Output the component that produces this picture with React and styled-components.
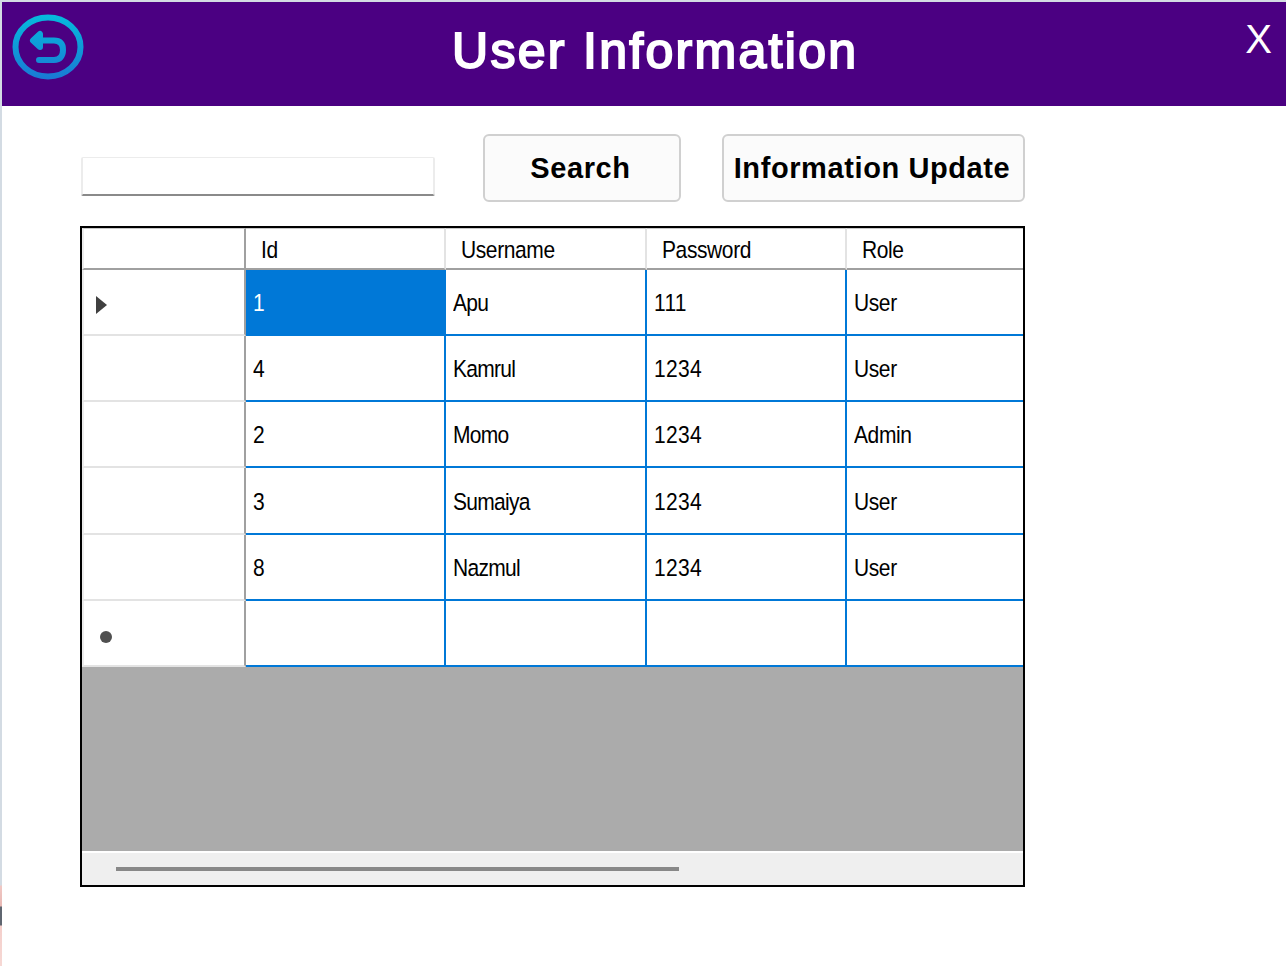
import React from "react";
import styled, { createGlobalStyle } from "styled-components";

const GlobalStyle = createGlobalStyle`
  html, body {
    margin: 0;
    padding: 0;
    background: #fff;
  }
  body {
    font-family: "Liberation Sans", Arial, sans-serif;
    color: #000;
  }
`;

const Page = styled.div`
  display: flex;
  width: 1286px;
  height: 966px;
  overflow: hidden;
`;

const DesktopEdge = styled.div`
  flex: 0 0 2px;
  background: linear-gradient(
    to bottom,
    #d3dbe3 0,
    #d3dbe3 885px,
    #f0c8c4 886px,
    #e8b8b4 906px,
    #5f6670 907px,
    #5f6670 925px,
    #f4cfcb 926px,
    #f6d8d4 100%
  );
`;

const Main = styled.div`
  flex: 1;
  display: flex;
  flex-direction: column;
  min-width: 0;
`;

const TopEdge = styled.div`
  flex: 0 0 2px;
  background: #d3dbe3;
`;

const Header = styled.header`
  flex: 0 0 104px;
  display: flex;
  align-items: flex-start;
  background: #4b0082;
  color: #fff;
`;

const BackIcon = styled.svg`
  flex: 0 0 auto;
  width: 72px;
  height: 66px;
  margin: 12px 0 0 10px;
`;

const Title = styled.h1`
  margin: 20px 0 0 368px;
  font-size: 50px;
  line-height: 58px;
  font-weight: 400;
  letter-spacing: 2.3px;
  -webkit-text-stroke: 2px #fff;
  white-space: nowrap;
`;

const CloseText = styled.span`
  margin: 14px 0 0 auto;
  padding-right: 14px;
  font-size: 40px;
  line-height: 46px;
`;

const Content = styled.main`
  padding: 28px 0 0 78px;
`;

const Toolbar = styled.div`
  display: flex;
  align-items: flex-start;
  gap: 41px;
  margin-bottom: 24px;
`;

const SearchInput = styled.input`
  box-sizing: border-box;
  width: 354px;
  height: 39px;
  margin: 23px 7px 0 1px;
  padding: 0;
  border: 2px solid #ececec;
  border-top-width: 1px;
  border-bottom: 2px solid #8a8a8a;
  border-radius: 2px;
  background: #fff;
  outline: none;
`;

const ActionButton = styled.button`
  box-sizing: border-box;
  width: ${(p) => p.$width}px;
  height: 68px;
  padding: 0 3px 0 0;
  border: 2px solid #d0d0d0;
  border-radius: 6px;
  background: #fbfbfb;
  color: #000;
  font-family: "Liberation Sans", Arial, sans-serif;
  font-size: 29px;
  font-weight: 700;
  letter-spacing: 0.6px;
`;

const GridFrame = styled.div`
  box-sizing: border-box;
  display: flex;
  flex-direction: column;
  width: 945px;
  height: 661px;
  border: 2px solid #000;
  background: #ababab;
`;

const Grid = styled.div`
  display: grid;
  grid-template-columns: 164px 200px 201px 200px 176px;
  grid-template-rows: 42px 66px 66px 66px 67px 66px 66px;
`;

const Cell = styled.div`
  box-sizing: border-box;
  display: flex;
  align-items: center;
  min-width: 0;
  padding: 2px 0 0 7px;
  border-right: ${(p) => (p.$last ? "0" : "2px solid #0078d7")};
  border-bottom: 2px solid #0078d7;
  background: ${(p) => (p.$selected ? "#0078d7" : "#fff")};
  color: ${(p) => (p.$selected ? "#fff" : "#000")};
`;

const HeadCell = styled.div`
  box-sizing: border-box;
  display: flex;
  align-items: center;
  padding: 2px 0 0 15px;
  border-top: 1px solid #c8c8c8;
  border-right: ${(p) => (p.$last ? "0" : "2px solid #e3e3e3")};
  border-bottom: 2px solid #a0a0a0;
  background: #fff;
`;

// the old grid font is tall and narrow, so stretch the text a little
const CellText = styled.span`
  display: inline-block;
  font-size: 21px;
  letter-spacing: ${(p) => p.$spacing ?? -0.4}px;
  transform: scaleY(1.13);
`;

const CornerCell = styled.div`
  box-sizing: border-box;
  border-top: 1px solid #c8c8c8;
  border-left: 2px solid #ececec;
  border-right: 2px solid #a0a0a0;
  border-bottom: 2px solid #a0a0a0;
  background: #fff;
`;

const RowHead = styled.div`
  box-sizing: border-box;
  display: flex;
  align-items: center;
  padding-left: 12px;
  border-left: 2px solid #ececec;
  border-right: 2px solid #a0a0a0;
  border-bottom: 2px solid #e3e3e3;
  background: #fff;
`;

const RowArrow = styled.span`
  width: 0;
  height: 0;
  margin-top: 6px;
  border-top: 9px solid transparent;
  border-bottom: 9px solid transparent;
  border-left: 11px solid #404040;
`;

const NewRowDot = styled.span`
  width: 12px;
  height: 12px;
  margin: 8px 0 0 4px;
  border-radius: 50%;
  background: #505050;
`;

const EmptyArea = styled.div`
  flex: 1;
`;

const ScrollTrack = styled.div`
  flex: 0 0 34px;
  box-sizing: border-box;
  padding: 14px 0 0 34px;
  border-top: 2px solid #fff;
  background: #efefef;
`;

const ScrollThumb = styled.div`
  width: 563px;
  height: 4px;
  background: #888;
`;

const columns = ["Id", "Username", "Password", "Role"];

const users = [
  { id: "1", username: "Apu", password: "111", role: "User" },
  { id: "4", username: "Kamrul", password: "1234", role: "User" },
  { id: "2", username: "Momo", password: "1234", role: "Admin" },
  { id: "3", username: "Sumaiya", password: "1234", role: "User" },
  { id: "8", username: "Nazmul", password: "1234", role: "User" },
];

const App = () => {
  return (
    <Page>
      <GlobalStyle />
      <DesktopEdge />
      <Main>
        <TopEdge />
        <Header>
          <BackIcon viewBox="0 0 72 66" fill="none">
            <defs>
              <linearGradient id="backGrad" gradientUnits="userSpaceOnUse" x1="0" y1="0" x2="0" y2="66">
                <stop offset="0" stopColor="#05bcdc" />
                <stop offset="1" stopColor="#1a78d4" />
              </linearGradient>
            </defs>
            <g stroke="url(#backGrad)" strokeWidth="6" strokeLinecap="round" strokeLinejoin="round">
              <ellipse cx="36" cy="33" rx="32.5" ry="29.5" />
              <path d="M21 26.5 L28 20 V33 Z" fill="url(#backGrad)" />
              <path d="M24 26.5 H42 C49 26.5 51 31 51 36 C51 42 48 46 42 46 H27" />
            </g>
          </BackIcon>
          <Title>User Information</Title>
          <CloseText>X</CloseText>
        </Header>
        <Content>
          <Toolbar>
            <SearchInput />
            <ActionButton $width={198}>Search</ActionButton>
            <ActionButton $width={303}>Information Update</ActionButton>
          </Toolbar>
          <GridFrame>
            <Grid>
              <CornerCell />
              {columns.map((c, i) => (
                <HeadCell key={c} $last={i === columns.length - 1}>
                  <CellText>{c}</CellText>
                </HeadCell>
              ))}
              {users.map((u, i) => (
                <React.Fragment key={u.id}>
                  <RowHead>{i === 0 && <RowArrow />}</RowHead>
                  <Cell $selected={i === 0}>
                    <CellText $spacing={0}>{u.id}</CellText>
                  </Cell>
                  <Cell>
                    <CellText $spacing={-0.7}>{u.username}</CellText>
                  </Cell>
                  <Cell>
                    <CellText $spacing={0.3}>{u.password}</CellText>
                  </Cell>
                  <Cell $last>
                    <CellText>{u.role}</CellText>
                  </Cell>
                </React.Fragment>
              ))}
              <RowHead>
                <NewRowDot />
              </RowHead>
              <Cell />
              <Cell />
              <Cell />
              <Cell $last />
            </Grid>
            <EmptyArea />
            <ScrollTrack>
              <ScrollThumb />
            </ScrollTrack>
          </GridFrame>
        </Content>
      </Main>
    </Page>
  );
};

export default App;
